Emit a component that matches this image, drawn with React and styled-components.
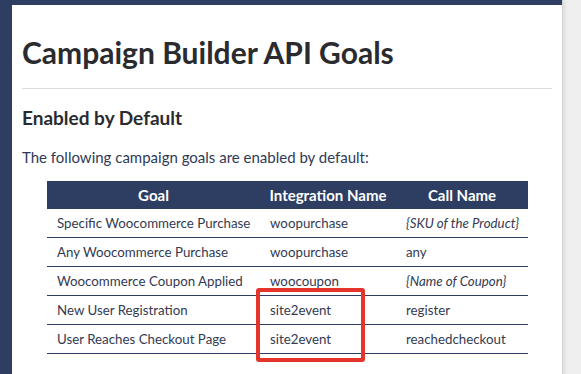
import styled, { createGlobalStyle } from "styled-components";

const GlobalStyle = createGlobalStyle`
	body {
		margin: 0;
		background: #efefef;
		font-family: "Lato", "Liberation Sans", sans-serif;
	}
`;

const goals = [
	{ goal: "Specific Woocommerce Purchase", integration: "woopurchase", call: "{SKU of the Product}", italic: true },
	{ goal: "Any Woocommerce Purchase", integration: "woopurchase", call: "any" },
	{ goal: "Woocommerce Coupon Applied", integration: "woocoupon", call: "{Name of Coupon}", italic: true },
	{ goal: "New User Registration", integration: "site2event", call: "register" },
	{ goal: "User Reaches Checkout Page", integration: "site2event", call: "reachedcheckout" },
];

const App = () => {
	return (
		<>
			<GlobalStyle />
			<Frame>
				<Panel>
					<Title>Campaign Builder API Goals</Title>
					<Rule />
					<SubTitle>Enabled by Default</SubTitle>
					<Intro>The following campaign goals are enabled by default:</Intro>
					<TableWrap>
						<Table>
							<colgroup>
								<col style={{ width: 213 }} />
								<col style={{ width: 136 }} />
								<col style={{ width: 132 }} />
							</colgroup>
							<thead>
								<tr>
									<Th>Goal</Th>
									<Th>Integration Name</Th>
									<Th>Call Name</Th>
								</tr>
							</thead>
							<tbody>
								{goals.map((row) => (
									<tr key={row.goal}>
										<Td>{row.goal}</Td>
										<Td>{row.integration}</Td>
										<Td $italic={row.italic}>{row.call}</Td>
									</tr>
								))}
							</tbody>
						</Table>
						<Highlight />
					</TableWrap>
				</Panel>
			</Frame>
		</>
	);
};

export default App;

const Frame = styled.div`
	width: 550px;
	min-height: 374px;
	padding: 5px 0 0 12px;
	background: #2e3d62;
	box-shadow: 1px 0 0 #d2d2d2, 3px 0 3px rgba(0, 0, 0, 0.08);
	display: flex;
`;

const Panel = styled.div`
	flex: 1;
	background: #fff;
	padding: 29px 10px 20px 10px;
`;

const Title = styled.h1`
	margin: 0;
	font-size: 30px;
	line-height: 36px;
	font-weight: 700;
	color: #2a2b2f;
`;

const Rule = styled.hr`
	margin: 18px 0 17px 0;
	border: none;
	border-top: 1px solid #dcdcdc;
`;

const SubTitle = styled.h2`
	margin: 0;
	font-size: 19px;
	line-height: 24px;
	font-weight: 700;
	color: #2a2b2f;
`;

const Intro = styled.p`
	margin: 17px 0 14px 0;
	font-size: 15px;
	line-height: 20px;
	color: #2f3a58;
`;

const TableWrap = styled.div`
	position: relative;
	margin-left: 25px;
	width: 481px;
`;

const Table = styled.table`
	width: 481px;
	border-collapse: collapse;
	table-layout: fixed;
`;

const Th = styled.th`
	height: 28px;
	padding: 0 4px;
	background: #2e3d62;
	color: #fff;
	font-size: 15px;
	font-weight: 700;
	text-align: center;
	white-space: nowrap;
`;

const Td = styled.td`
	height: 28px;
	padding: 0 10px;
	border-bottom: 1px solid #2e3d62;
	font-size: 13.3px;
	color: #333a52;
	font-style: ${(p) => (p.$italic ? "italic" : "normal")};
	white-space: nowrap;
`;

const Highlight = styled.div`
	position: absolute;
	left: 209px;
	top: 107px;
	width: 101px;
	height: 66px;
	border: 4px solid #e5352a;
	border-radius: 3px;
	pointer-events: none;
`;
